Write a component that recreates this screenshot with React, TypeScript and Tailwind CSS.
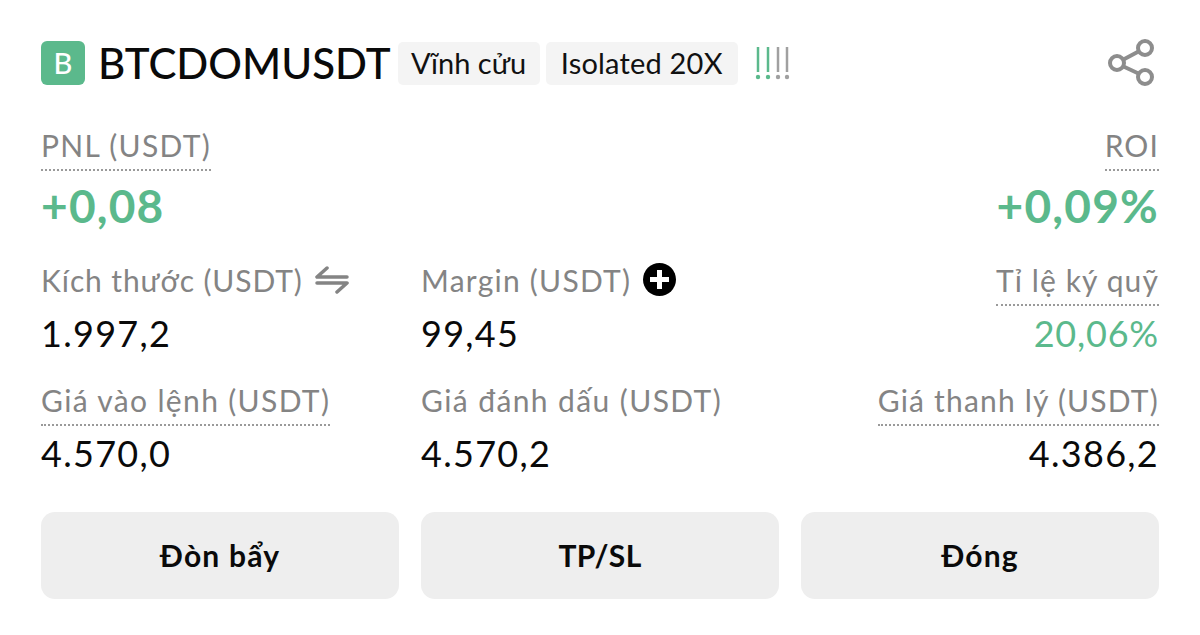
const F = "font-['Lato','Noto_Sans',sans-serif]";

function Label({ children, dotted = false, track = "tracking-[1.1px]" }: { children: React.ReactNode; dotted?: boolean; track?: string }) {
  return (
    <span className={`border-b-2 border-dotted pb-[6px] text-[30px] leading-[36px] text-[#848484] ${track} ${dotted ? "border-[#9a9a9a]" : "border-transparent"}`}>
      {children}
    </span>
  );
}

function Cell({ label, value, dotted, right, icon, green, track }: { label: string; value: string; dotted?: boolean; right?: boolean; icon?: React.ReactNode; green?: boolean; track?: string }) {
  return (
    <div className={`flex flex-col ${right ? "items-end" : "items-start"}`}>
      <div className="flex h-[43px] items-start gap-3">
        <Label dotted={dotted} track={track}>{label}</Label>
        {icon}
      </div>
      <div className={`mt-[8px] text-[36px] leading-[40px] ${green ? "tracking-[0.8px] text-[#5bb98c]" : "tracking-[1.3px] text-[#0a0a0a]"}`}>{value}</div>
    </div>
  );
}

function Btn({ children, track }: { children: React.ReactNode; track: string }) {
  return (
    <div className={`flex h-[87px] items-center justify-center rounded-[14px] bg-[#eeeeee] text-[30px] font-bold text-[#0a0a0a] ${track}`}>
      {children}
    </div>
  );
}

export default function App() {
  return (
    <div className={`h-[635px] w-[1200px] overflow-hidden bg-white px-[41px] pt-[41px] ${F}`}>
      <div className="flex h-[44px] items-center">
        <div className="flex h-[44px] w-[44px] items-center justify-center rounded-[6px] bg-[#5bb98c] text-[29px] font-medium text-white">B</div>
        <div className="ml-[13px] text-[42px] font-medium leading-[44px] text-[#0a0a0a]">BTCDOMUSDT</div>
        <div className="ml-[7px] flex h-[43px] items-center rounded-[5px] bg-[#f4f4f4] px-[13.5px] text-[29px] text-[#111]">Vĩnh cửu</div>
        <div className="ml-[6px] flex h-[43px] items-center rounded-[5px] bg-[#f4f4f4] px-[15px] text-[29px] tracking-[0.2px] text-[#111]">Isolated 20X</div>
        <svg className="ml-[16px]" width="36" height="36" viewBox="0 0 36 36">
          <g strokeWidth="2.500">
            <path d="M4 2v25" stroke="#5bb98c" /><path d="M14 2v25" stroke="#5bb98c" />
            <path d="M24 2v25" stroke="#a0a0a0" /><path d="M33 2v25" stroke="#a0a0a0" />
          </g>
          <circle cx="4" cy="32" r="2.200" fill="#5bb98c" /><circle cx="14" cy="32" r="2.200" fill="#5bb98c" />
          <circle cx="24" cy="32" r="2.200" fill="#a0a0a0" /><circle cx="33" cy="32" r="2.200" fill="#a0a0a0" />
        </svg>
        <svg className="ml-auto mr-[3px]" width="48" height="48" viewBox="0 0 48 48" fill="none" stroke="#8d8d8d" strokeWidth="4">
          <circle cx="9" cy="24" r="7" /><circle cx="37" cy="9" r="7" /><circle cx="37" cy="38" r="7" />
          <path d="M15.500 20.500L30.500 12.500M15.500 27.500L30.500 34.500" />
        </svg>
      </div>

      <div className="mt-[42px] flex justify-between">
        <div className="flex flex-col items-start">
          <div className="h-[44px]"><Label dotted track="tracking-[1.3px]">PNL (USDT)</Label></div>
          <div className="mt-[10px] text-[46px] font-bold leading-[50px] tracking-[1.2px] text-[#5bb98c]">+0,08</div>
        </div>
        <div className="flex flex-col items-end">
          <div className="h-[44px]"><Label dotted>ROI</Label></div>
          <div className="mt-[10px] text-[46px] font-bold leading-[50px] tracking-[1.2px] text-[#5bb98c]">+0,09%</div>
        </div>
      </div>

      <div className="mt-[31px] grid grid-cols-[380px_1fr_auto] gap-y-[29px]">
        <Cell label="Kích thước (USDT)" value="1.997,2" track="tracking-[0.9px]" icon={
          <svg className="mt-[3px]" width="36" height="30" viewBox="0 0 36 30" fill="none" stroke="#848484" strokeWidth="3.500" strokeLinecap="round" strokeLinejoin="round">
            <path d="M12 3L2 12h30M22 27l10-9H2" />
          </svg>
        } />
        <Cell label="Margin (USDT)" value="99,45" track="tracking-[1.25px]" icon={
          <svg className="mt-[1px]" width="33" height="33" viewBox="0 0 33 33">
            <circle cx="16.500" cy="16.500" r="16.500" fill="#000" />
            <path d="M16.500 7v19M7 16.500h19" stroke="#fff" strokeWidth="5" />
          </svg>
        } />
        <Cell label="Tỉ lệ ký quỹ" value="20,06%" dotted right green />
        <Cell label="Giá vào lệnh (USDT)" value="4.570,0" dotted track="tracking-[1.35px]" />
        <Cell label="Giá đánh dấu (USDT)" value="4.570,2" track="tracking-[1.4px]" />
        <Cell label="Giá thanh lý (USDT)" value="4.386,2" dotted right track="tracking-[1.2px]" />
      </div>

      <div className="mt-[39px] grid grid-cols-3 gap-[22px]">
        <Btn track="tracking-[1.2px]">Đòn bẩy</Btn>
        <Btn track="tracking-[0.4px]">TP/SL</Btn>
        <Btn track="tracking-[1.2px]">Đóng</Btn>
      </div>
    </div>
  );
}
